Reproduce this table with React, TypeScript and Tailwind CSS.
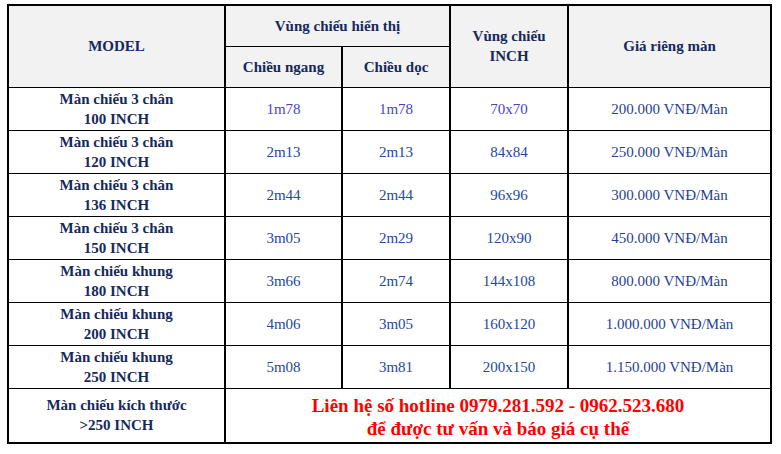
import React from "react";

interface Row {
  model: [string, string];
  ngang: string;
  doc: string;
  inch: string;
  price: string;
}

const rows: Row[] = [
  { model: ["Màn chiếu 3 chân", "100 INCH"], ngang: "1m78", doc: "1m78", inch: "70x70", price: "200.000 VNĐ/Màn" },
  { model: ["Màn chiếu 3 chân", "120 INCH"], ngang: "2m13", doc: "2m13", inch: "84x84", price: "250.000 VNĐ/Màn" },
  { model: ["Màn chiếu 3 chân", "136 INCH"], ngang: "2m44", doc: "2m44", inch: "96x96", price: "300.000 VNĐ/Màn" },
  { model: ["Màn chiếu 3 chân", "150 INCH"], ngang: "3m05", doc: "2m29", inch: "120x90", price: "450.000 VNĐ/Màn" },
  { model: ["Màn chiếu khung", "180 INCH"], ngang: "3m66", doc: "2m74", inch: "144x108", price: "800.000 VNĐ/Màn" },
  { model: ["Màn chiếu khung", "200 INCH"], ngang: "4m06", doc: "3m05", inch: "160x120", price: "1.000.000 VNĐ/Màn" },
  { model: ["Màn chiếu khung", "250 INCH"], ngang: "5m08", doc: "3m81", inch: "200x150", price: "1.150.000 VNĐ/Màn" },
];

const th = "bg-[#f2f2f2] font-bold text-[#16295c] text-[15px] leading-[20px] text-center align-middle";
const td = "text-center align-middle text-[15px] leading-[20px]";

const App: React.FC = () => (
  <div className="bg-white w-[781px] h-[454px] pl-[7px] pt-[4px] [font-family:'Liberation_Serif','Times_New_Roman',serif]">
    <table className="table-fixed border-collapse w-[763px] border-2 border-black">
      <colgroup>
        <col className="w-[217px]" />
        <col className="w-[117px]" />
        <col className="w-[108px]" />
        <col className="w-[118px]" />
        <col className="w-[203px]" />
      </colgroup>
      <thead>
        <tr className="h-[41px]">
          <th rowSpan={2} className={`${th} border-r-2 border-b border-black`}>MODEL</th>
          <th colSpan={2} className={`${th} border-r-2 border-b border-black`}>Vùng chiếu hiển thị</th>
          <th rowSpan={2} className={`${th} border-r-2 border-b border-black`}>
            Vùng chiếu
            <br />
            INCH
          </th>
          <th rowSpan={2} className={`${th} border-b border-black`}>Giá riêng màn</th>
        </tr>
        <tr className="h-[41px]">
          <th className={`${th} border-r-2 border-b border-black`}>Chiều ngang</th>
          <th className={`${th} border-r-2 border-b border-black`}>Chiều dọc</th>
        </tr>
      </thead>
      <tbody>
        {rows.map((r, i) => {
          const c = i === 0 ? "text-[#4b3fd2]" : "text-[#2448a0]";
          return (
            <tr key={r.model[1]} className="h-[43px]">
              <td className={`${td} font-bold text-[#16295c] border-r-2 border-b border-black`}>
                {r.model[0]}
                <br />
                {r.model[1]}
              </td>
              <td className={`${td} ${c} border-r-2 border-b border-black`}>{r.ngang}</td>
              <td className={`${td} ${c} border-r-2 border-b border-black`}>{r.doc}</td>
              <td className={`${td} ${c} border-r-2 border-b border-black`}>{r.inch}</td>
              <td className={`${td} text-[#1f3f94] border-b border-black`}>{r.price}</td>
            </tr>
          );
        })}
        <tr className="h-[55px]">
          <td className={`${td} font-bold text-[#16295c] border-r-2 border-black`}>
            Màn chiếu kích thước
            <br />
            &gt;250 INCH
          </td>
          <td colSpan={4} className="pt-[4px] text-center align-middle font-bold text-[#ff0000] text-[19px] leading-[23px]">
            Liên hệ số hotline 0979.281.592 - 0962.523.680
            <br />
            để được tư vấn và báo giá cụ thể
          </td>
        </tr>
      </tbody>
    </table>
  </div>
);

export default App;
